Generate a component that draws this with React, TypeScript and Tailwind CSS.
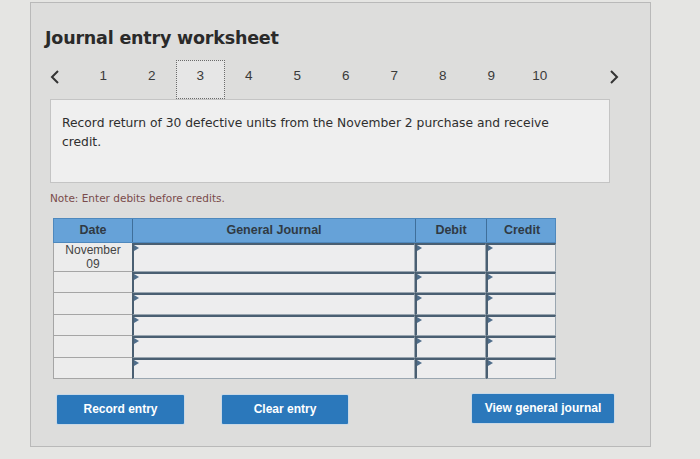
import { FC } from "react";

const pages = ["1", "2", "3", "4", "5", "6", "7", "8", "9", "10"];
const rows = [0, 1, 2, 3, 4, 5];

const InputCell: FC<{ className?: string }> = ({ className }) => (
    <div className={`relative border-l-2 border-t-2 border-r border-b border-l-[#4a5f72] border-t-[#4a5f72] border-r-[#9aa6b0] border-b-[#9aa6b0] bg-[#ededee] ${className ?? ""}`}>
        <span className="absolute left-0 top-0 h-0 w-0 border-y-[3px] border-l-[5px] border-y-transparent border-l-[#4f6d8a]" />
    </div>
);

export default function App() {
    return (
        <div className="h-[459px] w-[700px] overflow-hidden bg-[#e5e5e3] pl-[30px] pt-[2px] font-['Liberation_Sans',Arial,sans-serif]">
            <div className="h-[445px] w-[621px] border border-[#b9b9b9] bg-[#dddddc]">
                <h1 className="ml-[14px] mt-[23px] font-['DejaVu_Sans',sans-serif] text-[17.5px] font-bold leading-[24px] tracking-[-0.2px] text-[#2a2a2a]">
                    Journal entry worksheet
                </h1>

                {/* step navigation */}
                <div className="mt-[10px] flex h-[39px] items-center">
                    <span className="ml-[18px] w-[30px] pb-[6px] text-left">
                        <svg width="10" height="16" viewBox="0 0 10 16" className="ml-[1px]">
                            <path d="M8 2 L2 8 L8 14" fill="none" stroke="#333" strokeWidth="2" />
                        </svg>
                    </span>
                    {pages.map((p) => (
                        <div
                            key={p}
                            className={`flex h-[39px] w-[48.5px] items-center justify-center pb-[7px] text-[13.5px] text-[#3a3a3a] ${
                                p === "3" ? "border border-dotted border-[#6a6a6a] bg-[#e6e6e6]" : ""
                            }`}
                        >
                            {p}
                        </div>
                    ))}
                    <span className="ml-[45px] pb-[6px]">
                        <svg width="10" height="16" viewBox="0 0 10 16">
                            <path d="M2 2 L8 8 L2 14" fill="none" stroke="#333" strokeWidth="2" />
                        </svg>
                    </span>
                </div>

                {/* question */}
                <div className="ml-[19px] h-[84px] w-[560px] border border-[#c4c4c4] bg-[#efefef] px-[11px] pt-[14px] font-['DejaVu_Sans',sans-serif] text-[12.3px] leading-[19px] text-[#2e2e2e]">
                    <p className="w-[500px]">Record return of 30 defective units from the November 2 purchase and receive credit.</p>
                </div>

                <p className="ml-[19px] mt-[8px] font-['DejaVu_Sans',sans-serif] text-[10.5px] leading-[14px] text-[#7a4b4b]">
                    Note: Enter debits before credits.
                </p>

                {/* journal table */}
                <div className="ml-[22px] mt-[13px] w-[503px]">
                    <div className="grid h-[25px] grid-cols-[79px_283px_71px_70px] border border-[#4e88bd] bg-[#66a2d8] text-[12.5px] font-bold text-[#303a44]">
                        <div className="flex items-center justify-center border-r border-[#3f6f9a]">Date</div>
                        <div className="flex items-center justify-center border-r border-[#3f6f9a]">General Journal</div>
                        <div className="flex items-center justify-center border-r border-[#3f6f9a]">Debit</div>
                        <div className="flex items-center justify-center">Credit</div>
                    </div>
                    {rows.map((r) => (
                        <div
                            key={r}
                            className={`grid grid-cols-[79px_283px_71px_70px] ${r === 0 ? "h-[29px]" : "h-[21.4px]"}`}
                        >
                            <div className="flex flex-col items-center justify-center border-b border-l border-[#a5a5a5] bg-[#ececec] text-[12px] leading-[14px] text-[#444]">
                                {r === 0 && (
                                    <>
                                        <span>November</span>
                                        <span>09</span>
                                    </>
                                )}
                            </div>
                            <InputCell />
                            <InputCell />
                            <InputCell />
                        </div>
                    ))}
                </div>

                {/* actions */}
                <div className="ml-[26px] mt-[16px] flex items-start text-[12px] font-bold text-white">
                    <button className="h-[29px] w-[127px] rounded-[1px] bg-[#2b78bb] shadow-[0_0_0_1px_#c8d8e6]">Record entry</button>
                    <button className="ml-[38px] h-[29px] w-[126px] rounded-[1px] bg-[#2b78bb] shadow-[0_0_0_1px_#c8d8e6]">Clear entry</button>
                    <button className="ml-[124px] mt-[-1px] h-[29px] w-[142px] rounded-[1px] bg-[#2b78bb] shadow-[0_0_0_1px_#c8d8e6]">View general journal</button>
                </div>
            </div>
        </div>
    );
}
